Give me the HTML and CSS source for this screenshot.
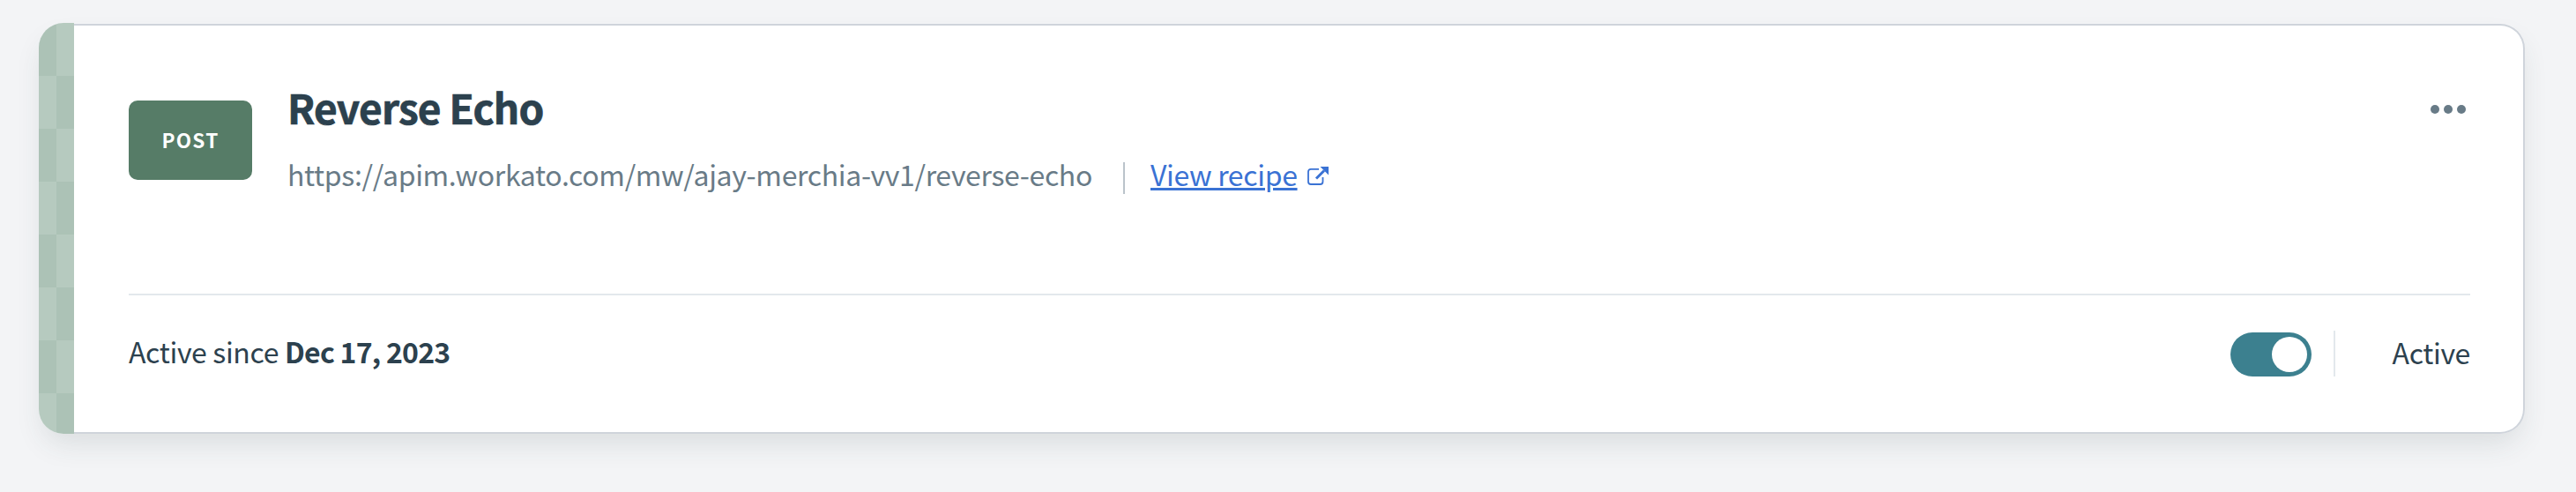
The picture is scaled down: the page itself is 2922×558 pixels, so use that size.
FILE: index.html
```html
<!DOCTYPE html>
<html lang="en">
<head>
<meta charset="utf-8">
<title>Reverse Echo</title>
<link rel="stylesheet" href="styles.css">
</head>
<body>
<article class="card">
  <div class="stripe"></div>
  <div class="content">
    <header class="summary">
      <span class="method">POST</span>
      <div class="details">
        <h2 class="title">Reverse Echo</h2>
        <div class="meta">
          <span class="url">https://apim.workato.com/mw/ajay-merchia-vv1/reverse-echo</span>
          <span class="separator"></span>
          <a class="link" href="#"><span class="link-text">View recipe</span><svg class="external" viewBox="0 0 26 24" width="26" height="24"><path d="M14 3.800H5Q2 3.800 2 6.800V18Q2 21 5 21H15.500Q18.500 21 18.500 18V13" fill="none" stroke="currentColor" stroke-width="1.800"/><path d="M11 14.500L20 5.500" fill="none" stroke="currentColor" stroke-width="3"/><path d="M15.500 1H25V10.500Z" fill="currentColor"/></svg></a>
        </div>
      </div>
      <button class="menu" aria-label="More actions"><i></i><i></i><i></i></button>
    </header>
    <footer class="status">
      <p class="since">Active since <strong class="date">Dec 17, 2023</strong></p>
      <div class="controls">
        <span class="toggle"><span class="knob"></span></span>
        <span class="state">Active</span>
      </div>
    </footer>
  </div>
</article>
</body>
</html>
```
FILE: styles.css
```css
* { box-sizing: border-box; }
html { background: #f3f4f6; }
body {
  height: 558px;
  margin: 0;
  padding: 26px 58px 0 44px;
  color: #2c414e;
  font-family: "Noto Sans CJK SC", "Noto Sans", sans-serif;
  font-size: 32px;
  letter-spacing: -0.350px;
}
.card {
  display: flex;
  height: 466px;
  border-radius: 28px;
  box-shadow: 0 16px 32px -6px rgba(44, 72, 72, 0.13);
}
.stripe {
  width: 40px;
  border-radius: 28px 0 0 28px;
  background: conic-gradient(#b6cabf 25%, #acc2b6 0 50%, #b6cabf 0 75%, #acc2b6 0) 0 0 / 40px 120px;
}
.content {
  flex: 1;
  margin-top: 1px;
  padding: 0 60px 0 62px;
  border: 2px solid #cfd4db;
  border-left: 0;
  border-radius: 0 28px 28px 0;
  background: #fff;
}
.summary {
  display: flex;
  height: 306px;
  padding-top: 62px;
  border-bottom: 2px solid #e3e8ec;
}
.method {
  width: 140px;
  height: 90px;
  margin: 23px 40px 0 0;
  border-radius: 10px;
  background: #567c67;
  color: #fff;
  font-size: 22.500px;
  font-weight: 700;
  line-height: 88px;
  letter-spacing: 1.300px;
  text-align: center;
}
.details { flex: 1; }
.title {
  margin: 0;
  font-size: 46px;
  font-weight: 700;
  line-height: 60px;
  letter-spacing: -0.800px;
  -webkit-text-stroke: 0.700px currentColor;
}
.meta { display: flex; align-items: center; height: 60px; margin-top: 21px; line-height: 50px; }
.url { margin-bottom: 10px; color: #697b87; }
.separator { width: 2px; height: 36px; margin: 0 29px 0 35px; background: #bac3ca; }
.link { display: flex; align-items: center; color: #3a72d4; text-decoration: none; }
.link-text {
  margin-bottom: 10px;
  text-decoration: underline;
  text-decoration-thickness: 3px;
  text-underline-offset: 2px;
}
.external { margin: 0 0 4px 10.500px; }
.menu {
  display: flex;
  gap: 5px;
  align-self: flex-start;
  margin: 27.500px 5px 0 0;
  padding: 0;
  border: 0;
  background: none;
}
.menu i { width: 10px; height: 10px; border-radius: 50%; background: #687b87; }
.status { display: flex; justify-content: space-between; }
.since { margin: 0; padding-top: 33px; line-height: 60px; }
.date { letter-spacing: -0.750px; }
.controls { display: flex; padding-top: 40px; }
.toggle { width: 92px; height: 50px; margin-top: 2px; padding: 5px; border-radius: 25px; background: #3c808f; }
.knob { display: block; width: 40px; height: 40px; margin-left: auto; border-radius: 50%; background: #fff; }
.state {
  width: 155px;
  height: 52px;
  margin-left: 25px;
  border-left: 2px solid #e3e8ec;
  line-height: 48px;
  text-align: right;
}
```
